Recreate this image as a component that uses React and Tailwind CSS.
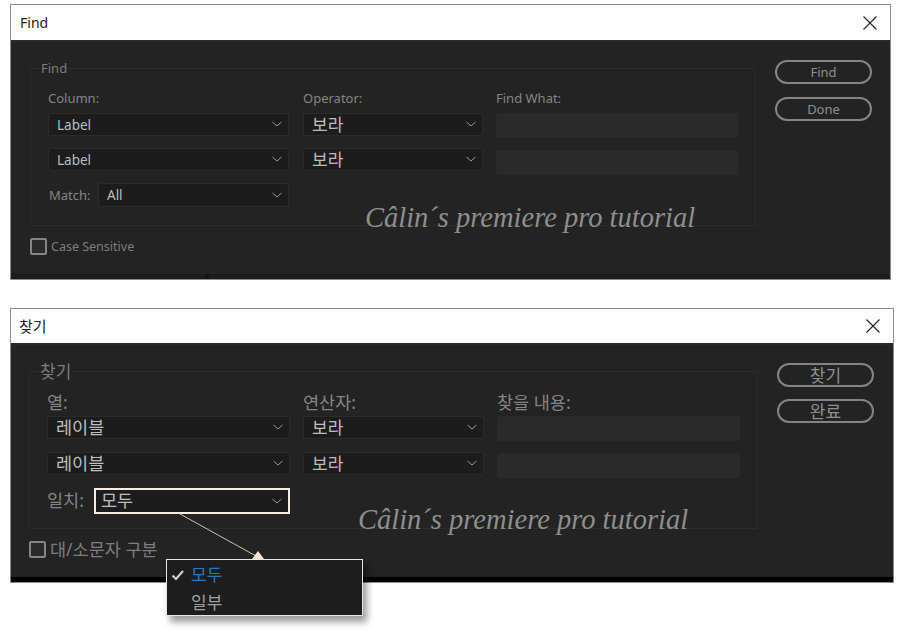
import React from "react";

const latin = "font-['Noto_Sans','Noto_Sans_CJK_KR',sans-serif]";

const Chevron = () => (
  <svg width="12" height="7" viewBox="0 0 12 7" fill="none" stroke="#9a9a9a" strokeWidth="1" className="shrink-0">
    <path d="M1.5 1l4.5 4 4.5-4" />
  </svg>
);

const Select = ({ value, className, textClass }) => (
  <div className={`flex items-center justify-between pl-[8px] pr-[5px] bg-[#1c1c1c] border border-[#2b2b2b] rounded-[2px] ${className}`}>
    <span className={`leading-none text-[#bdbdbd] ${textClass}`}>{value}</span>
    <Chevron />
  </div>
);

const Dialog = ({ t, sizes, stripClass, children }) => (
  <div className={`relative border border-[#8c8c8c] flex flex-col ${sizes.box}`}>
    <div className={`shrink-0 bg-white flex items-center justify-between border-b-2 border-[#2a2a2a] ${sizes.title}`}>
      <span className={`text-[#222] ${sizes.titleText}`}>{t.title}</span>
      <svg width="16" height="16" viewBox="0 0 16 16" stroke="#222" strokeWidth="1.1" fill="none">
        <path d="M1.5 1.5l13 13M14.5 1.5l-13 13" />
      </svg>
    </div>
    <div className={`flex-1 min-h-0 bg-[#232323] flex items-start ${sizes.body}`}>
      <div className="flex flex-col">
        <fieldset className={`border border-[#2c2c2c] rounded-[2px] ${sizes.group}`}>
          <legend className={`text-[#7d7d7d] leading-none px-[1px] -ml-[8px] ${sizes.legend}`}>{t.group}</legend>
          <div className={`flex ${sizes.columns}`}>
            <div className={`flex flex-col ${sizes.colA}`}>
              <span className={`text-[#858585] leading-none ${sizes.label}`}>{t.column}</span>
              <Select value={t.columnValue} className={sizes.select} textClass={sizes.value} />
              <Select value={t.columnValue} className={`${sizes.select} ${sizes.selectGap}`} textClass={sizes.value} />
              <div className={`flex items-center ${sizes.matchRow}`}>
                <span className={`text-[#858585] leading-none ${sizes.matchLabel}`}>{t.match}</span>
                {t.matchFocus ? (
                  <div className="flex-1 h-[26px] flex items-center justify-between pl-[5px] pr-[5px] bg-[#1c1c1c] border-2 border-[#f6eee4]">
                    <span className="text-[17.5px] leading-none text-[#bdbdbd]">{t.all}</span>
                    <Chevron />
                  </div>
                ) : (
                  <Select value={t.all} className="flex-1 h-[24px]" textClass={sizes.value} />
                )}
              </div>
            </div>
            <div className={`flex flex-col ${sizes.colB}`}>
              <span className={`text-[#858585] leading-none ${sizes.label}`}>{t.operator}</span>
              <Select value="보라" className={sizes.select} textClass="text-[17px]" />
              <Select value="보라" className={`${sizes.select} ${sizes.selectGap}`} textClass="text-[17px]" />
            </div>
            <div className={`flex flex-col ${sizes.colC}`}>
              <span className={`text-[#858585] leading-none ${sizes.label}`}>{t.findWhat}</span>
              <div className="h-[25px] bg-[#2a2a2a] rounded-[2px]" />
              <div className="h-[25px] mt-[12px] bg-[#2a2a2a] rounded-[2px]" />
            </div>
          </div>
        </fieldset>
        <div className={`flex items-center ${sizes.caseRow}`}>
          <span className="w-[17px] h-[17px] border-2 border-[#858585] rounded-[2px] bg-[#2a2a2a]" />
          <span className={`text-[#7d7d7d] leading-none ml-[4px] ${sizes.caseText}`}>{t.caseSensitive}</span>
        </div>
      </div>
      <div className={`flex flex-col ${sizes.buttons}`}>
        <div className={`h-[24px] border-2 border-[#848484] rounded-full flex items-center justify-center text-[#8f8f8f] leading-none ${sizes.button}`}>{t.find}</div>
        <div className={`h-[24px] border-2 border-[#848484] rounded-full flex items-center justify-center text-[#8f8f8f] leading-none ${sizes.button}`}>{t.done}</div>
      </div>
    </div>
    <div className={`shrink-0 h-[5px] ${stripClass}`} />
    {children}
  </div>
);

const Watermark = ({ className }) => (
  <span className={`absolute font-['Liberation_Serif',serif] italic text-[28.5px] leading-none text-[#8e8e8e] whitespace-nowrap ${className}`}>
    Câlin´s premiere pro tutorial
  </span>
);

const englishSizes = {
  box: "ml-[10px] w-[881px] h-[276px]",
  title: "h-[37px] pl-[9px] pr-[12px]",
  titleText: "text-[14px]",
  body: "pl-[19px] pt-[18px]",
  group: "mt-[2px] w-[726px] h-[164px] pl-[17px]",
  legend: "text-[13px]",
  columns: "mt-[17px]",
  colA: "w-[241px]",
  colB: "w-[180px] ml-[14px]",
  colC: "w-[242px] ml-[13px]",
  label: "text-[13px] h-[21px]",
  select: "h-[23px]",
  selectGap: "mt-[12px]",
  value: "text-[13.5px] pt-[2px]",
  matchRow: "mt-[12px]",
  matchLabel: "text-[13px] w-[50px] pl-[1px] pt-[1px]",
  caseRow: "mt-[12px]",
  caseText: "text-[12.5px] pt-[2px]",
  buttons: "ml-[19px] w-[97px] gap-[13px]",
  button: "text-[13px]",
};

const koreanSizes = {
  box: "ml-[10px] mt-[28px] w-[884px] h-[275px]",
  title: "h-[36px] pl-[8px] pr-[12px]",
  titleText: "text-[15px]",
  body: "pl-[18px] pt-[18px]",
  group: "w-[729px] h-[166px] pl-[17px]",
  legend: "text-[17px]",
  columns: "mt-[14px]",
  colA: "w-[243px]",
  colB: "w-[181px] ml-[13px]",
  colC: "w-[243px] ml-[13px]",
  label: "text-[17.5px] h-[22px]",
  select: "h-[23px]",
  selectGap: "mt-[13px]",
  value: "text-[17.5px]",
  matchRow: "mt-[13px]",
  matchLabel: "text-[17.5px] w-[47px]",
  caseRow: "mt-[12px]",
  caseText: "text-[17.5px]",
  buttons: "ml-[19px] w-[97px] gap-[12px]",
  button: "text-[17px]",
};

const english = {
  title: "Find",
  group: "Find",
  column: "Column:",
  columnValue: "Label",
  operator: "Operator:",
  findWhat: "Find What:",
  match: "Match:",
  all: "All",
  caseSensitive: "Case Sensitive",
  find: "Find",
  done: "Done",
};

const korean = {
  title: "찾기",
  group: "찾기",
  column: "열:",
  columnValue: "레이블",
  operator: "연산자:",
  findWhat: "찾을 내용:",
  match: "일치:",
  all: "모두",
  matchFocus: true,
  caseSensitive: "대/소문자 구분",
  find: "찾기",
  done: "완료",
};

export default function App() {
  return (
    <div className={`relative w-[900px] h-[632px] bg-white pt-[4px] overflow-hidden ${latin}`}>
      <Dialog t={english} sizes={englishSizes} stripClass="bg-[#1c1c1c]">
        <span className="absolute left-[194px] bottom-0 w-[4px] h-[5px] bg-[#141414]" />
      </Dialog>
      <Dialog t={korean} sizes={koreanSizes} stripClass="bg-black" />

      <Watermark className="left-[365px] top-[204px]" />
      <Watermark className="left-[358px] top-[506px]" />

      {/* callout from the focused field to its open menu */}
      <svg width="900" height="632" className="absolute left-0 top-0 pointer-events-none">
        <path d="M180 514L256 556" stroke="#c9c0b4" strokeWidth="1" fill="none" />
        <path d="M258 551l6 8h-12z" fill="#f6e6d4" />
      </svg>

      <div className="absolute left-[166px] top-[559px] w-[197px] h-[57px] bg-[#1d1d1d] border border-[#e6e6e6] shadow-[4px_6px_7px_rgba(0,0,0,0.4)] flex flex-col">
        <div className="h-[29px] flex items-center pl-[4px]">
          <svg width="14" height="12" viewBox="0 0 14 12" fill="none" stroke="#d0d0d0" strokeWidth="2.2">
            <path d="M1.5 6.5l3.5 3.5 7-8" />
          </svg>
          <span className="ml-[6px] text-[17px] leading-none text-[#2a76c6]">모두</span>
        </div>
        <div className="h-[26px] flex items-center pl-[24px]">
          <span className="text-[17px] leading-none text-[#a0a0a0]">일부</span>
        </div>
      </div>
    </div>
  );
}
